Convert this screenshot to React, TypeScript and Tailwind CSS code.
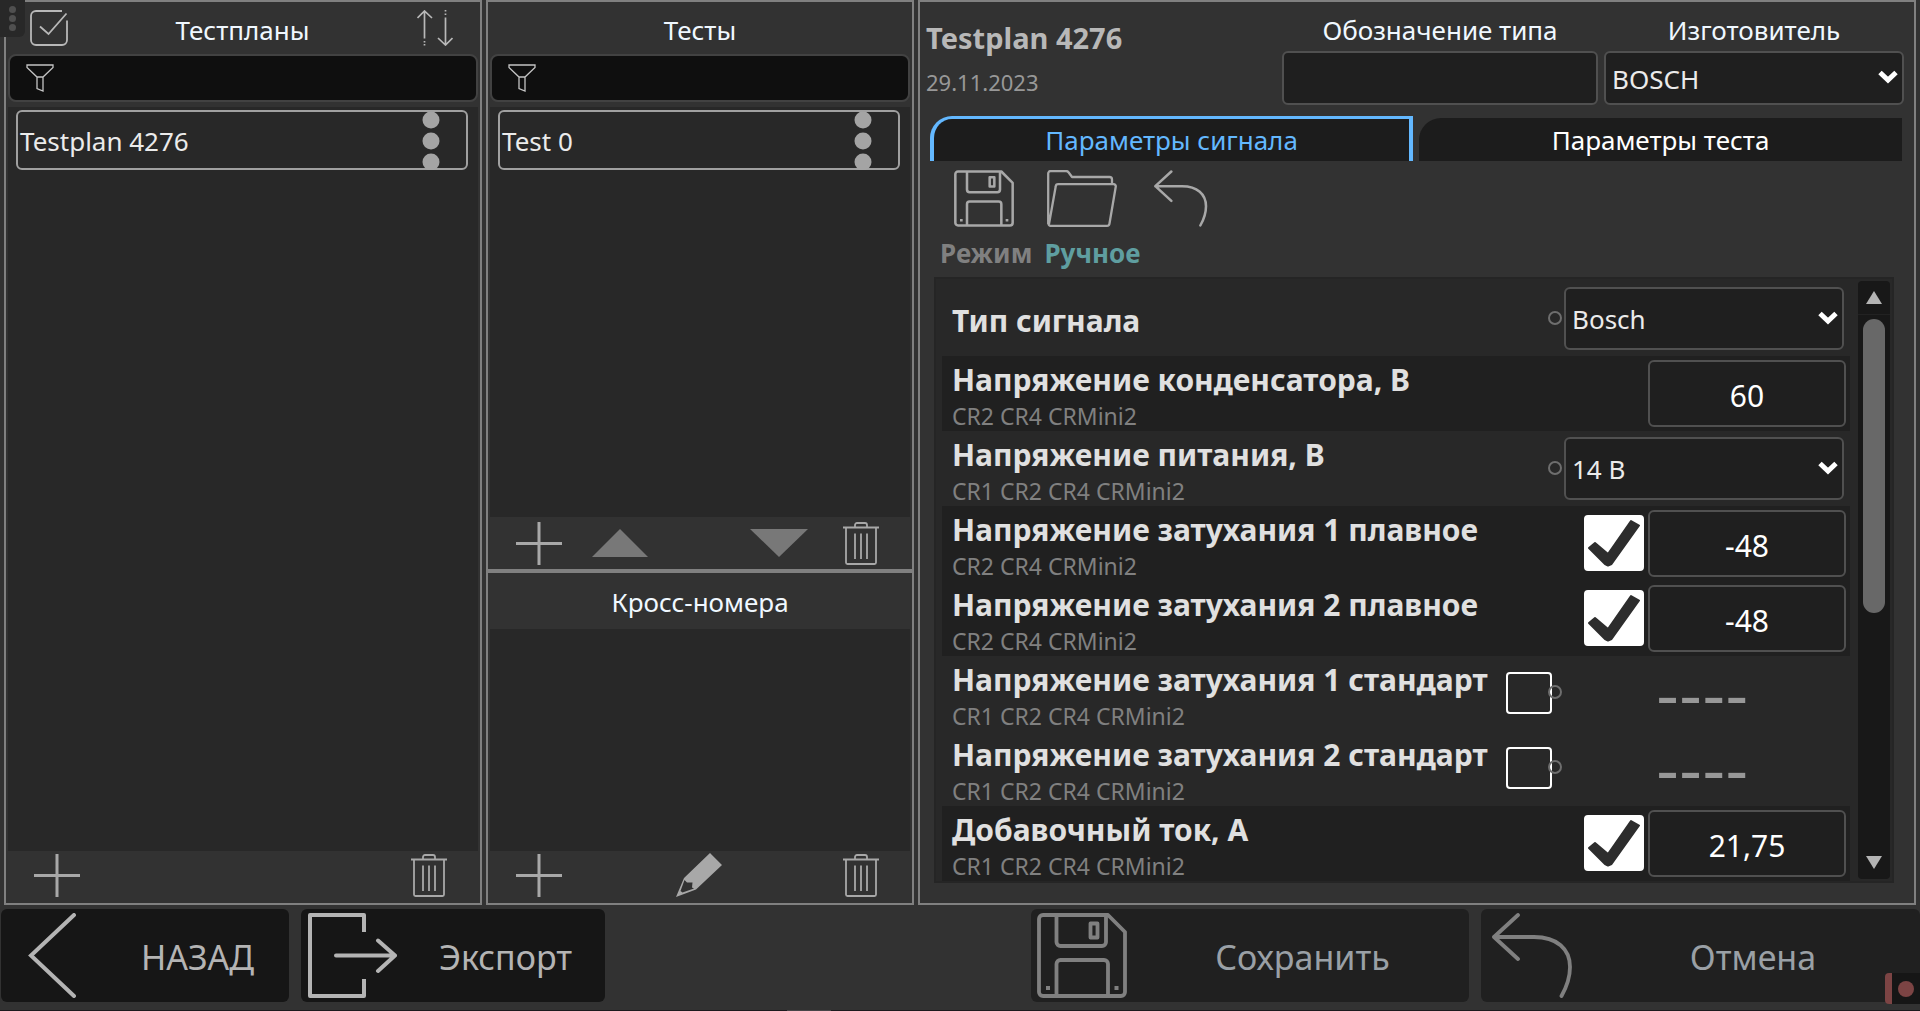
import { useState, type ReactNode } from 'react';

const params = [
  { name: 'Тип сигнала', devices: '', kind: 'select', value: 'Bosch' },
  { name: 'Напряжение конденсатора, В', devices: 'CR2 CR4 CRMini2', kind: 'value', value: '60' },
  { name: 'Напряжение питания, В', devices: 'CR1 CR2 CR4 CRMini2', kind: 'select', value: '14 В' },
  { name: 'Напряжение затухания 1 плавное', devices: 'CR2 CR4 CRMini2', kind: 'checked', value: '-48' },
  { name: 'Напряжение затухания 2 плавное', devices: 'CR2 CR4 CRMini2', kind: 'checked', value: '-48' },
  { name: 'Напряжение затухания 1 стандарт', devices: 'CR1 CR2 CR4 CRMini2', kind: 'unchecked', value: '' },
  { name: 'Напряжение затухания 2 стандарт', devices: 'CR1 CR2 CR4 CRMini2', kind: 'unchecked', value: '' },
  { name: 'Добавочный ток, А', devices: 'CR1 CR2 CR4 CRMini2', kind: 'checked', value: '21,75' },
];

function PlusIcon() {
  return (
    <svg width="46" height="43" viewBox="0 0 46 43" fill="none" stroke="#a8a8a8" strokeWidth="3">
      <path d="M23 0v43M0 21.5h46" />
    </svg>
  );
}

function TrashIcon() {
  return (
    <svg width="36" height="43" viewBox="0 0 36 43" fill="none" stroke="#a8a8a8" strokeWidth="1.8">
      <path d="M0 5.5h36M12 5.5V3a2 2 0 0 1 2-2h8a2 2 0 0 1 2 2v2.500M3 5.500V40.500a1.500 1.500 0 0 0 1.500 1.500h27a1.500 1.500 0 0 0 1.500-1.500V5.500M12 11.500V37M18 11.500V37M24 11.500V37" />
    </svg>
  );
}

function PencilIcon() {
  return (
    <svg width="46" height="44" viewBox="0 0 46 44" fill="#a8a8a8" fillRule="evenodd">
      <path d="M34 0L46 12L20 36.500L0 44L8 25ZM8.500 27L4.500 38L6.500 39.500L18 35.500L16 34.500L16.500 29.500L11 29.500Z" />
    </svg>
  );
}

function FunnelIcon() {
  return (
    <svg width="28" height="28" viewBox="0 0 28 28" fill="none" stroke="#c4c4c4" strokeWidth="1.3">
      <path d="M1 1h26v2.500L17 13H11L1 3.500ZM11 13V24.500L17 27V13" />
    </svg>
  );
}

function SelectAllIcon() {
  return (
    <svg width="38" height="36" viewBox="0 0 38 36" fill="none" stroke="#b8b8b8" strokeWidth="1.8">
      <path d="M32 1H6a5 5 0 0 0-5 5V30a5 5 0 0 0 5 5H32a5 5 0 0 0 5-5V10.500M10 16.500L18.500 24L36.500 3.500" />
    </svg>
  );
}

function SortIcon() {
  return (
    <svg width="36" height="36" viewBox="0 0 36 36" fill="none" stroke="#b8b8b8" strokeWidth="1.7">
      <path d="M.5 8L7.500 1L15 8M7.500 1V28.500M7.500 31v1.500M7.500 34v1.500M21 28L28.500 35L35.500 28M28.500 35V7.500M28.500 3.500v1.500M28.500 0v1.500" />
    </svg>
  );
}

function SaveIcon({ width, height, color }: { width: number; height: number; color: string }) {
  return (
    <svg width={width} height={height} viewBox="0 0 90 85" fill="none" stroke={color} strokeWidth="3.8" strokeLinejoin="round">
      <path d="M6 2H71L88 19V79a4 4 0 0 1-4 4H6a4 4 0 0 1-4-4V6a4 4 0 0 1 4-4Z" />
      <path d="M19.500 2V29a4 4 0 0 0 4 4H65a4 4 0 0 0 4-4V2M19.500 83V51a4 4 0 0 1 4-4H67a4 4 0 0 1 4 4V83M53.500 10.500h7v14h-7Z" />
      <path d="M9 75h4M77.500 75h4" />
    </svg>
  );
}

function UndoIcon({ width, height, color }: { width: number; height: number; color: string }) {
  return (
    <svg width={width} height={height} viewBox="0 0 81 85" fill="none" stroke={color} strokeWidth="3.8" strokeLinecap="round" strokeLinejoin="round">
      <path d="M26 2L2 24L26 46M2 24H42C65 24 78 36 78 54C78 64 74 75 69.500 83" />
    </svg>
  );
}

function FolderIcon() {
  return (
    <svg width="70" height="57" viewBox="0 0 70 57" fill="none" stroke="#a8a8a8" strokeWidth="2.300" strokeLinejoin="round">
      <path d="M1.200 54V3.500a2.500 2.500 0 0 1 2.500-2.500H19a3 3 0 0 1 2.500 1.300L25 7H62.500a2.500 2.500 0 0 1 2.500 2.500V14M2 54L8.700 16.500a2.500 2.500 0 0 1 2.500-2.300H66.500a2.200 2.200 0 0 1 2.200 2.800L62.500 53.500a2.500 2.500 0 0 1-2.500 2.300H3.500a2 2 0 0 1-2-2" />
    </svg>
  );
}

function Kebab() {
  return (
    <svg width="18" height="60" viewBox="0 0 18 60" fill="#a4a4a4">
      <circle cx="9" cy="10" r="8.500" />
      <circle cx="9" cy="31" r="8.500" />
      <circle cx="9" cy="52" r="8.500" />
    </svg>
  );
}

function FilterBox({ label }: { label: string }) {
  return (
    <label className="mx-[2px] flex h-12 items-center rounded-lg border-2 border-[#424242] bg-[#0f0f0f] pl-4">
      <FunnelIcon />
      <input aria-label={label} className="ml-2 h-full min-w-0 flex-1 bg-transparent text-[#ebebeb] outline-none" />
    </label>
  );
}

function ListItem({ text }: { text: string }) {
  return (
    <div className="mt-[3px] mr-[10px] ml-2 flex h-[60px] items-center justify-between rounded-md border-2 border-[#a0a0a0] pr-[26px] pl-[2px] text-[#ebebeb]">
      <span className="pt-[2px]">{text}</span>
      <button aria-label="Меню" className="h-[60px]">
        <Kebab />
      </button>
    </div>
  );
}

function IconButton({ label, children }: { label: string; children: ReactNode }) {
  return (
    <button aria-label={label} className="flex items-center">
      {children}
    </button>
  );
}

function Dropdown({ id, label, value, className }: { id?: string; label?: string; value: string; className: string }) {
  return (
    <div className={`relative ${className}`}>
      <select
        id={id}
        aria-label={label}
        className="h-full w-full appearance-none rounded-md border-2 border-[#505050] bg-[#1f1f1f] pt-[2px] pl-[6px] text-[#ebebeb]"
      >
        <option>{value}</option>
      </select>
      <svg width="20" height="14" viewBox="0 0 20 14" fill="none" stroke="#fff" strokeWidth="5" className="pointer-events-none absolute top-1/2 right-[6px] -mt-2">
        <path d="M2 2.500L10 10L18 2.500" />
      </svg>
    </div>
  );
}

function Dot() {
  return <span className="block h-[14px] w-[14px] rounded-full border-2 border-[#6e6e6e]" />;
}

function Tick({ label }: { label: string }) {
  return (
    <div className="relative h-14 w-[60px]">
      <input type="checkbox" defaultChecked aria-label={label} className="peer block h-full w-full appearance-none rounded-sm border-2 border-white checked:bg-white" />
      <svg width="60" height="56" viewBox="0 0 60 56" fill="#2d2d2d" stroke="#2d2d2d" strokeWidth="2" strokeLinejoin="round" className="pointer-events-none absolute inset-0 hidden peer-checked:block">
        <path d="M5 33L11 28L24 39L47 6L55 10.500L27.500 49L24 50.500L21 49Z" />
      </svg>
    </div>
  );
}

function ParamRow({ param }: { param: (typeof params)[number] }) {
  const dark = param.kind === 'value' || param.kind === 'checked';
  return (
    <div className={`flex h-[75px] pl-[10px] ${dark ? 'bg-[#202020]' : ''}`}>
      <div className={`min-w-0 flex-1 ${param.devices ? 'pt-1' : 'pt-5'}`}>
        <div className="text-[30px] leading-10 font-bold whitespace-nowrap text-[#e0e0e0]">{param.name}</div>
        <div className="text-[23px] leading-8 text-[#808080]">{param.devices}</div>
      </div>
      {param.kind === 'select' && (
        <div className="flex items-start gap-[2px] pt-[6px] pr-[6px]">
          <div className="pt-6">
            <Dot />
          </div>
          <Dropdown label={param.name} value={param.value} className="h-[63px] w-[280px]" />
        </div>
      )}
      {dark && (
        <div className="flex items-start gap-1 pt-1 pr-1">
          {param.kind === 'checked' && (
            <div className="pt-[5px]">
              <Tick label={param.name} />
            </div>
          )}
          <input
            aria-label={param.name}
            defaultValue={param.value}
            className="h-[67px] w-[198px] rounded-md border-2 border-[#505050] bg-[#1f1f1f] pt-1 text-center text-[30px] text-white"
          />
        </div>
      )}
      {param.kind === 'unchecked' && (
        <div className="flex w-[344px] items-start">
          <input type="checkbox" aria-label={param.name} className="mt-4 h-[42px] w-[46px] appearance-none rounded-sm border-2 border-white" />
          <div className="-ml-1 pt-[29px]">
            <Dot />
          </div>
          <div className="ml-[94px] font-['DejaVu_Sans',sans-serif] text-[64px] leading-[80px] text-[#989898]">----</div>
        </div>
      )}
    </div>
  );
}

function FooterButton({ label, className, icon }: { label: string; className: string; icon: ReactNode }) {
  return (
    <button className={`flex h-[93px] items-center rounded-md ${className}`}>
      <span className="flex w-[105px] shrink-0 justify-start pl-[6px]">{icon}</span>
      <span className="flex-1 pt-1 text-center text-[34px]">{label}</span>
    </button>
  );
}

export default function App() {
  const [tab, setTab] = useState('signal');
  const tabs = [
    { id: 'signal', title: 'Параметры сигнала' },
    { id: 'test', title: 'Параметры теста' },
  ];

  return (
    <div className="relative flex min-h-screen flex-col bg-[#323232] font-['Noto_Sans','Open_Sans',sans-serif] text-[26px]">
      <main className="grid flex-1 grid-cols-[478fr_428fr_998fr] gap-1 px-1">
        {/* Test plans */}
        <section className="flex min-w-0 flex-col border-2 border-[#808080]">
          <header className="flex h-[52px] items-center justify-between pr-[27px] pl-6 text-[#f0f8ff]">
            <IconButton label="Выбрать все">
              <SelectAllIcon />
            </IconButton>
            <h2 className="pt-1">Тестпланы</h2>
            <IconButton label="Сортировка">
              <SortIcon />
            </IconButton>
          </header>
          <FilterBox label="Фильтр тестпланов" />
          <div className="mx-[2px] mt-[5px] flex-1 bg-[#282828]">
            <ListItem text="Testplan 4276" />
          </div>
          <div className="flex h-[52px] items-center justify-between pr-[33px] pb-1 pl-7">
            <IconButton label="Добавить тестплан">
              <PlusIcon />
            </IconButton>
            <IconButton label="Удалить тестплан">
              <TrashIcon />
            </IconButton>
          </div>
        </section>

        {/* Tests and cross numbers */}
        <div className="flex min-w-0 flex-col">
          <section className="flex flex-[571] flex-col border-2 border-[#808080]">
            <header className="flex h-[52px] items-center justify-center text-[#f0f8ff]">
              <h2 className="pt-1">Тесты</h2>
            </header>
            <FilterBox label="Фильтр тестов" />
            <div className="mx-[2px] mt-[5px] flex-1 bg-[#282828]">
              <ListItem text="Test 0" />
            </div>
            <div className="flex h-[52px] items-center pr-[33px] pl-7">
              <IconButton label="Добавить тест">
                <PlusIcon />
              </IconButton>
              <button aria-label="Вверх" className="ml-[30px]">
                <svg width="56" height="28" viewBox="0 0 56 28" fill="#787878">
                  <path d="M28 0L56 28H0Z" />
                </svg>
              </button>
              <button aria-label="Вниз" className="mr-[35px] ml-auto">
                <svg width="58" height="28" viewBox="0 0 58 28" fill="#787878">
                  <path d="M0 0H58L29 28Z" />
                </svg>
              </button>
              <IconButton label="Удалить тест">
                <TrashIcon />
              </IconButton>
            </div>
          </section>
          <section className="flex flex-[332] flex-col border-2 border-[#808080]">
            <header className="flex h-14 items-center justify-center text-[#f0f8ff]">
              <h2 className="pt-[2px]">Кросс-номера</h2>
            </header>
            <div className="mx-[2px] flex-1 bg-[#282828]" />
            <div className="flex h-[52px] items-center justify-between pr-[33px] pb-1 pl-7">
              <IconButton label="Добавить номер">
                <PlusIcon />
              </IconButton>
              <button aria-label="Изменить номер" className="mr-2">
                <PencilIcon />
              </button>
              <IconButton label="Удалить номер">
                <TrashIcon />
              </IconButton>
            </div>
          </section>
        </div>

        {/* Signal parameters */}
        <section className="flex min-w-0 flex-col border-2 border-[#808080] pr-[10px] pl-[6px]">
          <header className="flex h-[114px] gap-[6px] text-[#f0f8ff]">
            <div className="flex-1 pt-4">
              <h1 className="text-[29px] leading-10 font-bold text-[#b8b8b8]">Testplan 4276</h1>
              <div className="pt-2 text-[22px] leading-8 text-[#989898]">29.11.2023</div>
            </div>
            <div className="flex w-[316px] flex-col text-center">
              <label htmlFor="type" className="h-[49px] pt-2 leading-10">
                Обозначение типа
              </label>
              <input id="type" className="h-[54px] rounded-md border-2 border-[#505050] bg-[#1f1f1f] px-2 text-[#ebebeb]" />
            </div>
            <div className="flex w-[300px] flex-col text-center">
              <label htmlFor="maker" className="h-[49px] pt-2 leading-10">
                Изготовитель
              </label>
              <Dropdown id="maker" value="BOSCH" className="h-[54px]" />
            </div>
          </header>

          <div role="tablist" className="mr-[2px] ml-1 grid h-[45px] grid-cols-2 gap-[6px]">
            {tabs.map((t) => (
              <button
                key={t.id}
                role="tab"
                aria-selected={tab === t.id}
                onClick={() => setTab(t.id)}
                className={`rounded-tl-[22px] bg-[#1c1c1c] leading-10 ${
                  tab === t.id ? 'border-x-4 border-t-[3px] border-[#63b8ff] text-[#63b8ff]' : 'mt-[2px] text-white'
                }`}
              >
                {t.title}
              </button>
            ))}
          </div>

          <div className="flex pt-[9px] pl-7">
            <IconButton label="Сохранить параметры">
              <SaveIcon width={60} height={57} color="#a8a8a8" />
            </IconButton>
            <button aria-label="Открыть" className="ml-[33px]">
              <FolderIcon />
            </button>
            <button aria-label="Отменить изменения" className="ml-[37px]">
              <UndoIcon width={54} height={57} color="#a8a8a8" />
            </button>
          </div>
          <div className="flex h-[50px] gap-3 pt-2 pl-[14px] text-[26px] leading-9 font-bold">
            <span className="text-[#808080]">Режим</span>
            <span className="text-[#5f9ea0]">Ручное</span>
          </div>

          <div className="mr-[10px] mb-5 ml-2 flex flex-1 border-2 border-[#252525] bg-[#282828] px-[2px]">
            <div className="min-w-0 flex-1 pt-[2px] pr-2 pl-1">
              {params.map((p) => (
                <ParamRow key={p.name} param={p} />
              ))}
            </div>
            <div className="my-[2px] flex w-8 flex-col items-center rounded-sm bg-[#181818]">
              <div className="flex h-[34px] w-full items-center justify-center border-b border-[#222222]">
                <svg width="16" height="13" viewBox="0 0 16 13" fill="#b4b4b4">
                  <path d="M8 0L16 13H0Z" />
                </svg>
              </div>
              <div className="mt-1 h-[294px] w-[22px] rounded-full bg-[#686868]" />
              <div className="mt-auto flex h-[34px] items-center">
                <svg width="16" height="13" viewBox="0 0 16 13" fill="#b4b4b4">
                  <path d="M0 0H16L8 13Z" />
                </svg>
              </div>
            </div>
          </div>
        </section>
      </main>

      <footer className="mt-1 flex gap-3 pb-2 pl-px">
        <FooterButton
          label="НАЗАД"
          className="w-72 bg-[#161616] text-[#b4b4b4]"
          icon={
            <svg width="90" height="85" viewBox="0 0 90 85" fill="none" stroke="#b4b4b4" strokeWidth="4" strokeLinecap="round">
              <path d="M67 2L24 42.500L67 83" />
            </svg>
          }
        />
        <FooterButton
          label="Экспорт"
          className="w-76 bg-[#161616] text-[#b4b4b4]"
          icon={
            <svg width="90" height="85" viewBox="0 0 90 85" fill="none" stroke="#b4b4b4" strokeWidth="4" strokeLinejoin="round">
              <path d="M57 19V2H3V83H57V66" />
              <path d="M29 42.500H88M71 27.500L88 42.500L71 58" strokeLinecap="round" />
            </svg>
          }
        />
        <div className="flex-1" />
        <FooterButton label="Сохранить" className="w-[438px] bg-[#202020] text-[#9aa0a6]" icon={<SaveIcon width={90} height={85} color="#808080" />} />
        <FooterButton
          label="Отмена"
          className="w-[439px] bg-[#202020] text-[#9aa0a6]"
          icon={
            <span className="pl-[5px]">
              <UndoIcon width={81} height={85} color="#808080" />
            </span>
          }
        />
      </footer>
      <div className="flex h-[3px] bg-[#1c1a1d] pl-[41%]">
        <div className="w-11 bg-[#484548]" />
      </div>

      {/* Overlay grips */}
      <div className="absolute top-0 left-0 flex h-[37px] w-[25px] flex-col items-center justify-center gap-[2px] rounded-br-md bg-[#282828]">
        <span className="h-[7px] w-[7px] rounded-full bg-[#505050]" />
        <span className="h-[7px] w-[7px] rounded-full bg-[#505050]" />
        <span className="h-[7px] w-[7px] rounded-full bg-[#505050]" />
      </div>
      <div className="absolute right-0 bottom-[9px] flex h-[31px] w-[35px] items-center justify-center rounded-l-sm border-l-[7px] border-[#7c4444] bg-[#161616]">
        <span className="h-4 w-4 rounded-full bg-[#7c4444]" />
      </div>
    </div>
  );
}
